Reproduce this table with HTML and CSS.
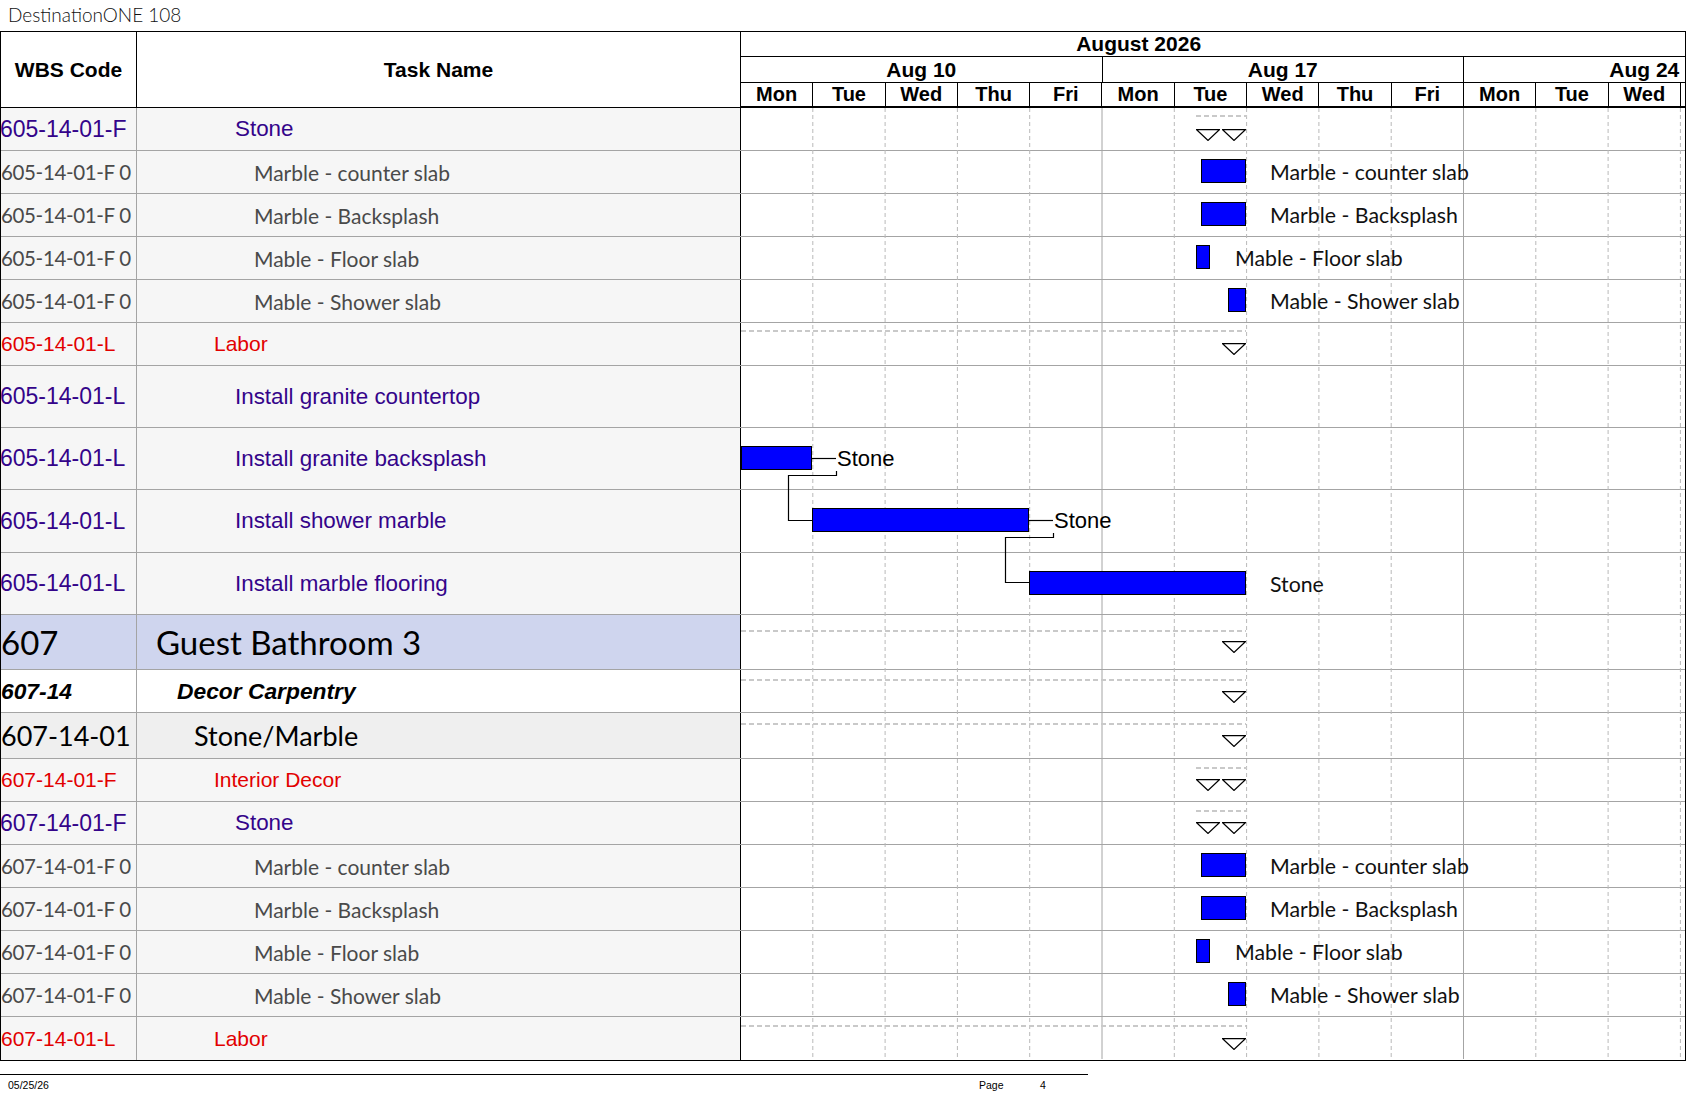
FILE: index.html
```html
<!DOCTYPE html>
<html>
<head>
<meta charset="utf-8">
<title>DestinationONE 108</title>
<link rel="stylesheet" href="styles.css">
</head>
<body>
<div class="title">DestinationONE 108</div>
<div class="table">
  <div class="head">
    <div class="h-wbs">WBS Code</div>
    <div class="h-task">Task Name</div>
    <div class="h-chart">
      <div class="h-month"><div class="month-cell">August 2026</div></div>
      <div class="h-weeks">
        <div class="week">Aug 10</div><div class="week">Aug 17</div><div class="week">Aug 24</div>
      </div>
      <div class="h-days">
        <div class="day">Mon</div><div class="day">Tue</div><div class="day">Wed</div><div class="day">Thu</div><div class="day">Fri</div>
        <div class="day">Mon</div><div class="day">Tue</div><div class="day">Wed</div><div class="day">Thu</div><div class="day">Fri</div>
        <div class="day">Mon</div><div class="day">Tue</div><div class="day">Wed</div><div class="day"></div>
      </div>
    </div>
  </div>
  <div class="body">
    <svg class="grid" width="944" height="951" viewBox="0 0 944 951">
      <g class="dash">
        <line x1="71.8" y1="0" x2="71.8" y2="951"/>
        <line x1="144.1" y1="0" x2="144.1" y2="951"/>
        <line x1="216.4" y1="0" x2="216.4" y2="951"/>
        <line x1="288.7" y1="0" x2="288.7" y2="951"/>
        <line x1="433.3" y1="0" x2="433.3" y2="951"/>
        <line x1="505.6" y1="0" x2="505.6" y2="951"/>
        <line x1="577.9" y1="0" x2="577.9" y2="951"/>
        <line x1="650.2" y1="0" x2="650.2" y2="951"/>
        <line x1="794.8" y1="0" x2="794.8" y2="951"/>
        <line x1="867.1" y1="0" x2="867.1" y2="951"/>
        <line x1="939.4" y1="0" x2="939.4" y2="951"/>
      </g>
      <g class="solid">
        <line x1="361" y1="0" x2="361" y2="951"/>
        <line x1="722.5" y1="0" x2="722.5" y2="951"/>
      </g>
    </svg>

    <div class="row h43 purple">
      <div class="wbs">605-14-01-F</div>
      <div class="task i5">Stone</div>
      <div class="chart">
        <div class="sumline" style="left:455px;width:51px;top:7px"></div>
        <svg class="tri" style="left:455px;top:21px" viewBox="0 0 24 12"><path d="M0.6 0.6H23.4L12 11.4Z"/></svg>
        <svg class="tri" style="left:481px;top:21px" viewBox="0 0 24 12"><path d="M0.6 0.6H23.4L12 11.4Z"/></svg>
      </div>
    </div>
    <div class="row h43 grey">
      <div class="wbs">605-14-01-F 0</div>
      <div class="task i6">Marble - counter slab</div>
      <div class="chart">
        <div class="bar" style="left:460px;width:45px"></div>
        <div class="lbl" style="left:529px">Marble - counter slab</div>
      </div>
    </div>
    <div class="row h43 grey">
      <div class="wbs">605-14-01-F 0</div>
      <div class="task i6">Marble - Backsplash</div>
      <div class="chart">
        <div class="bar" style="left:460px;width:45px"></div>
        <div class="lbl" style="left:529px">Marble - Backsplash</div>
      </div>
    </div>
    <div class="row h43 grey">
      <div class="wbs">605-14-01-F 0</div>
      <div class="task i6">Mable - Floor slab</div>
      <div class="chart">
        <div class="bar" style="left:455px;width:14px"></div>
        <div class="lbl" style="left:494px">Mable - Floor slab</div>
      </div>
    </div>
    <div class="row h43 grey">
      <div class="wbs">605-14-01-F 0</div>
      <div class="task i6">Mable - Shower slab</div>
      <div class="chart">
        <div class="bar" style="left:487px;width:18px"></div>
        <div class="lbl" style="left:529px">Mable - Shower slab</div>
      </div>
    </div>
    <div class="row h43 red">
      <div class="wbs">605-14-01-L</div>
      <div class="task i4">Labor</div>
      <div class="chart">
        <div class="sumline" style="left:0;width:505px;top:7px"></div>
        <svg class="tri" style="left:481px;top:20px" viewBox="0 0 24 12"><path d="M0.6 0.6H23.4L12 11.4Z"/></svg>
      </div>
    </div>
    <div class="row h62 purple">
      <div class="wbs">605-14-01-L</div>
      <div class="task i5">Install granite countertop</div>
      <div class="chart"></div>
    </div>
    <div class="row h62 purple">
      <div class="wbs">605-14-01-L</div>
      <div class="task i5">Install granite backsplash</div>
      <div class="chart">
        <svg class="conn" width="340" height="100"><path d="M71 30.5H95"/><path d="M95.5 43V47.5H47.5V92.5H71"/></svg>
        <div class="bar" style="left:0;width:71px"></div>
        <div class="lbl arial" style="left:96px">Stone</div>
      </div>
    </div>
    <div class="row h63 purple">
      <div class="wbs">605-14-01-L</div>
      <div class="task i5">Install shower marble</div>
      <div class="chart">
        <svg class="conn" width="340" height="100"><path d="M288 30.5H312"/><path d="M312.5 43V47.5H264.5V92.5H288"/></svg>
        <div class="bar" style="left:71px;width:217px"></div>
        <div class="lbl arial" style="left:313px">Stone</div>
      </div>
    </div>
    <div class="row h62 purple">
      <div class="wbs">605-14-01-L</div>
      <div class="task i5">Install marble flooring</div>
      <div class="chart">
        <div class="bar" style="left:288px;width:217px"></div>
        <div class="lbl" style="left:529px">Stone</div>
      </div>
    </div>
    <div class="row h55 lvl1">
      <div class="wbs">607</div>
      <div class="task i1">Guest Bathroom 3</div>
      <div class="chart">
        <div class="sumline" style="left:0;width:505px;top:15px"></div>
        <svg class="tri" style="left:481px;top:26px" viewBox="0 0 24 12"><path d="M0.6 0.6H23.4L12 11.4Z"/></svg>
      </div>
    </div>
    <div class="row h43 lvl2">
      <div class="wbs">607-14</div>
      <div class="task i2">Decor Carpentry</div>
      <div class="chart">
        <div class="sumline" style="left:0;width:505px;top:9px"></div>
        <svg class="tri" style="left:481px;top:21px" viewBox="0 0 24 12"><path d="M0.6 0.6H23.4L12 11.4Z"/></svg>
      </div>
    </div>
    <div class="row h46 lvl3">
      <div class="wbs">607-14-01</div>
      <div class="task i3">Stone/Marble</div>
      <div class="chart">
        <div class="sumline" style="left:0;width:505px;top:10px"></div>
        <svg class="tri" style="left:481px;top:22px" viewBox="0 0 24 12"><path d="M0.6 0.6H23.4L12 11.4Z"/></svg>
      </div>
    </div>
    <div class="row h43 red">
      <div class="wbs">607-14-01-F</div>
      <div class="task i4">Interior Decor</div>
      <div class="chart">
        <div class="sumline" style="left:455px;width:51px;top:8px"></div>
        <svg class="tri" style="left:455px;top:20px" viewBox="0 0 24 12"><path d="M0.6 0.6H23.4L12 11.4Z"/></svg>
        <svg class="tri" style="left:481px;top:20px" viewBox="0 0 24 12"><path d="M0.6 0.6H23.4L12 11.4Z"/></svg>
      </div>
    </div>
    <div class="row h43 purple">
      <div class="wbs">607-14-01-F</div>
      <div class="task i5">Stone</div>
      <div class="chart">
        <div class="sumline" style="left:455px;width:51px;top:8px"></div>
        <svg class="tri" style="left:455px;top:20px" viewBox="0 0 24 12"><path d="M0.6 0.6H23.4L12 11.4Z"/></svg>
        <svg class="tri" style="left:481px;top:20px" viewBox="0 0 24 12"><path d="M0.6 0.6H23.4L12 11.4Z"/></svg>
      </div>
    </div>
    <div class="row h43 grey">
      <div class="wbs">607-14-01-F 0</div>
      <div class="task i6">Marble - counter slab</div>
      <div class="chart">
        <div class="bar" style="left:460px;width:45px"></div>
        <div class="lbl" style="left:529px">Marble - counter slab</div>
      </div>
    </div>
    <div class="row h43 grey">
      <div class="wbs">607-14-01-F 0</div>
      <div class="task i6">Marble - Backsplash</div>
      <div class="chart">
        <div class="bar" style="left:460px;width:45px"></div>
        <div class="lbl" style="left:529px">Marble - Backsplash</div>
      </div>
    </div>
    <div class="row h43 grey">
      <div class="wbs">607-14-01-F 0</div>
      <div class="task i6">Mable - Floor slab</div>
      <div class="chart">
        <div class="bar" style="left:455px;width:14px"></div>
        <div class="lbl" style="left:494px">Mable - Floor slab</div>
      </div>
    </div>
    <div class="row h43 grey">
      <div class="wbs">607-14-01-F 0</div>
      <div class="task i6">Mable - Shower slab</div>
      <div class="chart">
        <div class="bar" style="left:487px;width:18px"></div>
        <div class="lbl" style="left:529px">Mable - Shower slab</div>
      </div>
    </div>
    <div class="row h43 red last">
      <div class="wbs">607-14-01-L</div>
      <div class="task i4">Labor</div>
      <div class="chart">
        <div class="sumline" style="left:0;width:505px;top:8px"></div>
        <svg class="tri" style="left:481px;top:21px" viewBox="0 0 24 12"><path d="M0.6 0.6H23.4L12 11.4Z"/></svg>
      </div>
    </div>
  </div>
</div>
<div class="footer">
  <div class="f-date">05/25/26</div>
  <div class="f-page">Page</div>
  <div class="f-num">4</div>
</div>
</body>
</html>
```

FILE: styles.css
```css
* { box-sizing: border-box; }

body {
  margin: 0;
  background: #ffffff;
  font-family: "Liberation Sans", Arial, sans-serif;
  color: #000;
}

.title {
  height: 31px;
  padding-left: 8px;
  font-family: Lato, "Liberation Sans", sans-serif;
  font-weight: 300;
  font-size: 19px;
  line-height: 30px;
  color: #111;
  white-space: nowrap;
}

.table {
  width: 1686px;
  border: 1px solid #000;
}

/* ---------- header ---------- */
.head {
  display: grid;
  grid-template-columns: 136px 604px 944px;
  height: 76px;
}

.h-wbs,
.h-task {
  display: flex;
  align-items: center;
  justify-content: center;
  font-weight: bold;
  font-size: 21px;
  border-bottom: 1px solid #000;
  border-right: 1px solid #000;
}

.h-chart {
  display: flex;
  flex-direction: column;
  overflow: hidden;
}

.h-month {
  display: flex;
  height: 25px;
  border-bottom: 1px solid #000;
  overflow: hidden;
}

.month-cell {
  flex: none;
  width: 1518.3px;
  margin-left: -361.5px;
  text-align: center;
  font-weight: bold;
  font-size: 21px;
  line-height: 24px;
}

.h-weeks {
  display: flex;
  height: 26px;
  border-bottom: 1px solid #000;
  overflow: hidden;
}

.week {
  flex: none;
  width: 361.5px;
  border-right: 1px solid #000;
  text-align: center;
  font-weight: bold;
  font-size: 21px;
  line-height: 25px;
}

.h-days {
  display: flex;
  height: 25px;
  border-bottom: 2px solid #000;
  overflow: hidden;
}

.day {
  flex: none;
  width: 72.3px;
  border-right: 1px solid #000;
  text-align: center;
  font-weight: bold;
  font-size: 20px;
  line-height: 23px;
}

/* ---------- body ---------- */
.body {
  position: relative;
  background: #fff;
}

.grid {
  position: absolute;
  left: 740px;
  top: 0;
}

.grid .dash line {
  stroke: #b9b9b9;
  stroke-width: 1;
  stroke-dasharray: 4 3;
}

.grid .solid line {
  stroke: #a4a4a4;
  stroke-width: 1;
}

.row {
  display: grid;
  grid-template-columns: 136px 604px 944px;
  border-bottom: 1px solid #a4a4a4;
}

.row.last { border-bottom: none; }

.h43 { height: 43px; }
.h46 { height: 46px; }
.h55 { height: 55px; }
.h62 { height: 62px; }
.h63 { height: 63px; }

.wbs {
  display: flex;
  align-items: center;
  overflow: hidden;
  white-space: nowrap;
  background: #f6f6f6;
  border-right: 1px solid #a4a4a4;
}

.task {
  display: flex;
  align-items: center;
  white-space: nowrap;
  background: #f6f6f6;
  border-right: 1px solid #000;
}

.i1 { padding-left: 19px; }
.i2 { padding-left: 40px; }
.i3 { padding-left: 57px; }
.i4 { padding-left: 77px; }
.i5 { padding-left: 98px; }
.i6 { padding-left: 117px; }

.chart {
  position: relative;
}

/* row styles */
.purple .wbs { color: #34048a; font-size: 23px; text-indent: -1px; }
.purple .task { color: #34048a; font-size: 22.4px; }

.red .wbs,
.red .task { color: #e20000; font-size: 21px; }

.grey .wbs,
.grey .task {
  color: #4a4a4a;
  font-family: Lato, "Liberation Sans", sans-serif;
  font-size: 21px;
}

.grey .wbs {
  font-size: 20.5px;
  letter-spacing: -0.35px;
}

.lvl1 .wbs,
.lvl1 .task {
  background: #cfd5ee;
  color: #000;
  font-family: Lato, "Liberation Sans", sans-serif;
  font-size: 33px;
}

.lvl2 .wbs,
.lvl2 .task {
  background: #ffffff;
  color: #000;
  font-weight: bold;
  font-style: italic;
  font-size: 22.8px;
}

.lvl3 .wbs,
.lvl3 .task {
  background: #efefef;
  color: #000;
  font-family: Lato, "Liberation Sans", sans-serif;
  font-size: 27px;
}

/* gantt marks */
.sumline {
  position: absolute;
  height: 2px;
  background: repeating-linear-gradient(to right, #c9c9c9 0 5px, transparent 5px 8px);
}

.tri {
  position: absolute;
  width: 24px;
  height: 12px;
}

.tri path {
  fill: #fff;
  stroke: #000;
  stroke-width: 1.3;
}

.bar {
  position: absolute;
  top: calc(50% - 13px);
  height: 24px;
  background: #0000ff;
  border: 1px solid #000;
}

.lbl {
  position: absolute;
  top: 0;
  bottom: 0;
  display: flex;
  align-items: center;
  white-space: nowrap;
  font-family: Lato, "Liberation Sans", sans-serif;
  font-size: 21.3px;
  color: #111;
}

.lbl.arial {
  font-family: "Liberation Sans", Arial, sans-serif;
  font-size: 22px;
  color: #000;
}

.conn {
  position: absolute;
  left: 0;
  top: 0;
  overflow: visible;
}

.conn path {
  fill: none;
  stroke: #000;
  stroke-width: 1.2;
}

/* ---------- footer ---------- */
.footer {
  width: 1088px;
  margin-top: 13px;
  border-top: 1px solid #000;
  display: grid;
  grid-template-columns: 979px 61px auto;
  padding-top: 4px;
  font-size: 10.5px;
  line-height: 13px;
  color: #000;
}

.f-date { padding-left: 8px; }
```
